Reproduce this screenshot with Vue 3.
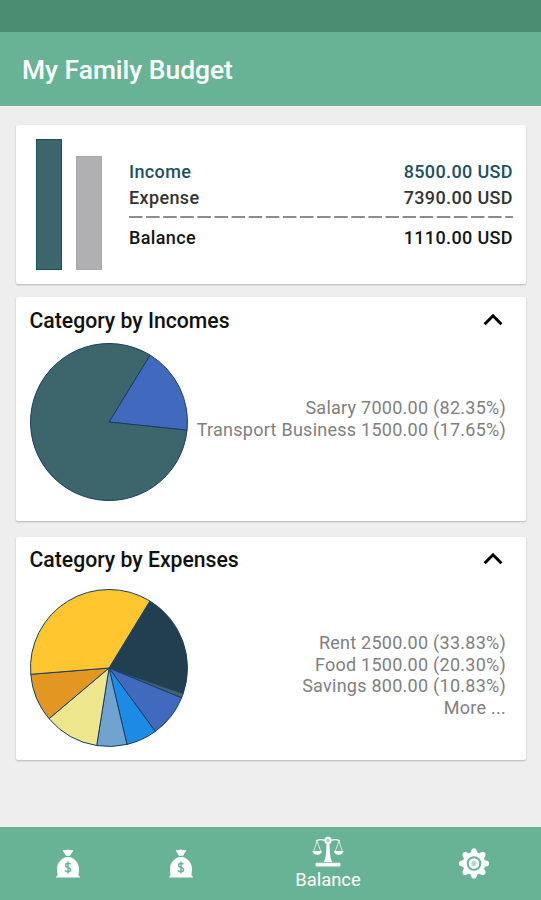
<template>
  <main class="app">
    <div class="status-bar"></div>
    <header class="toolbar">
      <h1>My Family Budget</h1>
    </header>

    <section class="content">
      <div class="card summary">
        <div class="bars">
          <div
            v-for="bar in bars"
            :key="bar.name"
            :class="`bar ${bar.name}`"
            :style="{ height: barHeight(bar.amount) }"
          ></div>
        </div>
        <div class="totals">
          <div class="row income">
            <span>Income</span>
            <span>{{ formatAmount(income) }} USD</span>
          </div>
          <div class="row">
            <span>Expense</span>
            <span>{{ formatAmount(expense) }} USD</span>
          </div>
          <svg class="divider" width="384" height="2">
            <line x1="0" y1="1" x2="384" y2="1" />
          </svg>
          <div class="row balance">
            <span>Balance</span>
            <span>{{ formatAmount(income - expense) }} USD</span>
          </div>
        </div>
      </div>

      <div v-for="card in cards" :key="card.id" :class="`card category ${card.id}`">
        <div class="category-head" @click="card.open = !card.open">
          <h2>{{ card.title }}</h2>
          <svg
            :class="['chevron', { closed: !card.open }]"
            width="20"
            height="13"
            viewBox="0 0 20 13"
          >
            <path d="M1.6 11.2 L10 2.8 L18.4 11.2" />
          </svg>
        </div>
        <div v-if="card.open" class="category-body">
          <svg class="pie" width="160" height="160" viewBox="-80 -80 160 160">
            <path
              v-for="slice in card.slices"
              :key="slice.from"
              :d="slicePath(slice)"
              :fill="slice.color"
            />
          </svg>
          <ul class="legend">
            <li v-for="line in card.legend" :key="line">{{ line }}</li>
          </ul>
        </div>
      </div>
    </section>

    <nav class="bottom-nav">
      <button
        v-for="tab in tabs"
        :key="tab.id"
        :class="['tab', { active: activeTab === tab.id }]"
        @click="activeTab = tab.id"
      >
        <svg v-if="tab.icon === 'bag'" width="24" height="29" viewBox="0 0 24 29">
          <path
            fill="#fff"
            d="M6.6 1.2 Q9.3 1.6 12 .6 Q14.7 1.6 17.4 1.2 L14 6.8 H10 Z M9.6 8 H14.4 C18 9.4 23 13.4 23 20 Q23 24.5 22.2 26 Q23.6 26.8 24 28.6 H0 Q.4 26.8 1.8 26 Q1 24.5 1 20 C1 13.4 6 9.4 9.6 8 Z"
          />
          <path
            class="mark"
            d="M14.6 15.4 Q14 14.2 12 14.2 Q9.6 14.2 9.6 16.2 Q9.6 18 12 18.4 Q14.6 18.8 14.6 20.8 Q14.6 22.8 12 22.8 Q9.8 22.8 9.2 21.4 M12 12.4 V24.6"
          />
        </svg>
        <svg v-else-if="tab.icon === 'scales'" width="32" height="31" viewBox="0 0 32 31">
          <path class="thin" d="M4.2 4.8 Q8 2.8 13 4.3 M27.8 4.8 Q24 2.8 19 4.3" />
          <path class="thin faint" d="M5 5 L1.6 15.5 M5 5 L8.8 15.5 M27 5 L23.2 15.5 M27 5 L30.4 15.5" />
          <path fill="#fff" d="M.4 15 H10 Q9.4 18.7 5.2 18.7 Q1 18.7 .4 15 Z M22 15 H31.6 Q31 18.7 26.8 18.7 Q22.6 18.7 22 15 Z" />
          <path fill="#fff" d="M14.6 6.5 H17.4 L18 18 Q18.4 23 20.4 26 H11.6 Q13.6 23 14 18 Z" />
          <circle class="pivot" cx="16" cy="4.4" r="2.7" />
          <rect x="3.6" y="26.8" width="24.8" height="3.6" rx="1" fill="#fff" />
        </svg>
        <svg v-else width="30" height="31" viewBox="-15 -15.5 30 31">
          <path
            v-for="n in 8"
            :key="n"
            d="M-4 -9 L-2.5 -13.6 Q-2 -15.2 0 -15.2 Q2 -15.2 2.5 -13.6 L4 -9 Z"
            fill="#fff"
            :transform="`rotate(${n * 45})`"
          />
          <circle class="ring" r="9.3" />
          <circle class="hub" r="4" />
        </svg>
        <span v-if="activeTab === tab.id">{{ tab.label }}</span>
      </button>
    </nav>
  </main>
</template>

<script setup>
import { ref } from "vue";

const income = ref(8500);
const expense = ref(7390);

const bars = [
  { name: "bar-income", amount: income.value },
  { name: "bar-expense", amount: expense.value },
];

// slice angles in degrees, clockwise from the top
const cards = ref([
  {
    id: "incomes",
    title: "Category by Incomes",
    open: true,
    slices: [
      { from: 31.5, to: 96, color: "#4169be" },
      { from: 96, to: 391.5, color: "#3c666c" },
    ],
    legend: ["Salary 7000.00 (82.35%)", "Transport Business 1500.00 (17.65%)"],
  },
  {
    id: "expenses",
    title: "Category by Expenses",
    open: true,
    slices: [
      { from: 31.4, to: 109, color: "#223f50" },
      { from: 109, to: 112.4, color: "#3c666c" },
      { from: 112.4, to: 143.9, color: "#4169be" },
      { from: 143.9, to: 166.8, color: "#1b8be6" },
      { from: 166.8, to: 189, color: "#70a3cf" },
      { from: 189, to: 229.8, color: "#ede68c" },
      { from: 229.8, to: 265.4, color: "#e39622" },
      { from: 265.4, to: 391.4, color: "#ffc62f" },
    ],
    legend: [
      "Rent 2500.00 (33.83%)",
      "Food 1500.00 (20.30%)",
      "Savings 800.00 (10.83%)",
      "More ...",
    ],
  },
]);

const tabs = [
  { id: "incomes", icon: "bag", label: "Incomes" },
  { id: "expenses", icon: "bag", label: "Expenses" },
  { id: "balance", icon: "scales", label: "Balance" },
  { id: "settings", icon: "gear", label: "Settings" },
];
const activeTab = ref("balance");

const formatAmount = (value) => value.toFixed(2);

const barHeight = (amount) => `${(amount / income.value) * 131.5}px`;

const point = (angle) => {
  const rad = (angle * Math.PI) / 180;
  return `${78.5 * Math.sin(rad)} ${-78.5 * Math.cos(rad)}`;
};

const slicePath = ({ from, to }) => {
  const large = to - from > 180 ? 1 : 0;
  return `M0 0 L${point(from)} A78.5 78.5 0 ${large} 1 ${point(to)} Z`;
};
</script>

<style>
body {
  background: #eeeeee;
}
</style>

<style scoped>
.app {
  display: flex;
  flex-direction: column;
  height: 900px;
  background: #eeeeee;
  font-family: Roboto, "Liberation Sans", sans-serif;
}

.status-bar {
  height: 32px;
  background: #4b8d70;
}

.toolbar {
  display: flex;
  align-items: center;
  height: 74px;
  padding: 0 22px;
  background: #68b395;
}

.toolbar h1 {
  margin: 1px 0 0;
  color: #fff;
  font-size: 26.4px;
  font-weight: 500;
}

.content {
  flex: 1;
  padding: 19px 15px 0 16px;
}

.card {
  box-sizing: border-box;
  background: #fff;
  border-radius: 2px;
  box-shadow: 0 1px 2px rgba(0, 0, 0, 0.24);
}

.summary {
  display: flex;
  height: 159px;
  padding: 13px 13px 13px 20px;
}

.bars {
  display: flex;
  align-items: flex-end;
  gap: 14px;
  height: 132px;
}

.bar {
  box-sizing: border-box;
  width: 26px;
}

.bar-income {
  background: #3c666c;
  border: 1px solid #16525c;
}

.bar-expense {
  background: #b0b0b2;
  border: 1px solid #a9a9ab;
}

.totals {
  flex: 1;
  margin-left: 27px;
  padding-top: 21px;
}

.row {
  display: flex;
  justify-content: space-between;
  height: 26px;
  line-height: 26px;
  color: #333;
  font-size: 18px;
  font-weight: 500;
  letter-spacing: 0.37px;
}

.row.income {
  color: #1d515e;
}

.row.balance {
  margin-top: 7px;
  color: #151515;
}

.divider {
  display: block;
  margin-top: 5px;
}

.divider line {
  stroke: #8c8c8c;
  stroke-width: 2;
  stroke-dasharray: 13.5 3.6;
}

.category {
  height: 223.5px;
}

.incomes {
  margin-top: 13px;
}

.expenses {
  margin-top: 16px;
}

.category-head {
  display: flex;
  align-items: center;
  justify-content: space-between;
  height: 46px;
  padding: 0 23px 0 13.5px;
  cursor: pointer;
}

.category-head h2 {
  margin: 0;
  color: #111;
  font-size: 21.2px;
  font-weight: 500;
}

.chevron {
  margin-top: -2px;
  fill: none;
  stroke: #000;
  stroke-width: 3;
}

.chevron.closed {
  transform: rotate(180deg);
}

.category-body {
  display: flex;
  justify-content: space-between;
  padding: 0 20px 0 12.5px;
}

.incomes .category-body {
  margin-top: -1px;
}

.expenses .category-body {
  margin-top: 5.5px;
}

.pie {
  flex: none;
}

.pie path {
  stroke: #173f66;
  stroke-width: 1;
  stroke-linejoin: round;
}

.legend {
  margin: 0;
  padding: 0;
  list-style: none;
  color: #808080;
  font-size: 18px;
  line-height: 21.6px;
  letter-spacing: 0.26px;
  text-align: right;
  white-space: nowrap;
}

.incomes .legend {
  padding-top: 55px;
}

.expenses .legend {
  padding-top: 44px;
}

.bottom-nav {
  display: grid;
  grid-template-columns: 113px 113px 181px 111px;
  height: 73px;
  padding-left: 11.5px;
  background: #68b395;
}

.tab {
  display: flex;
  flex-direction: column;
  align-items: center;
  justify-content: center;
  padding: 0;
  border: 0;
  background: none;
  color: #fff;
  font-family: inherit;
  font-size: 18.4px;
  cursor: pointer;
}

.tab span {
  margin-top: 2px;
  line-height: 22px;
}

.mark {
  fill: none;
  stroke: #68b395;
  stroke-width: 1.5;
}

.thin {
  fill: none;
  stroke: #fff;
  stroke-width: 1.4;
}

.faint {
  opacity: 0.7;
  stroke-width: 1;
}

.pivot {
  fill: #a9d3c2;
  stroke: #fff;
  stroke-width: 1.8;
}

.ring {
  fill: none;
  stroke: #fff;
  stroke-width: 4;
}

.hub {
  fill: #b5d9ca;
  stroke: #fff;
  stroke-width: 2.6;
}
</style>
